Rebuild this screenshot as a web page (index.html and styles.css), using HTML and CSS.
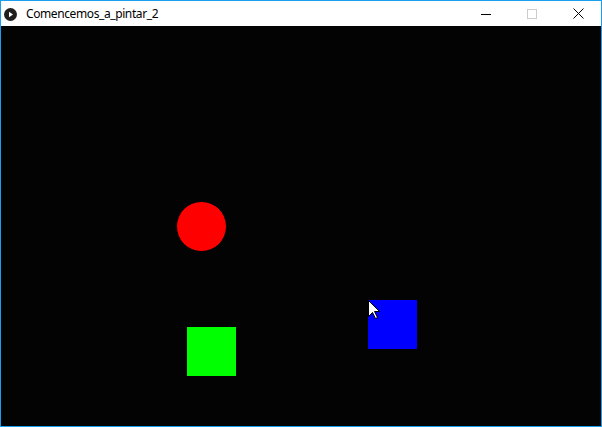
FILE: index.html
```html
<!DOCTYPE html>
<html>
<head>
<meta charset="utf-8">
<title>Comencemos_a_pintar_2</title>
<link rel="stylesheet" href="styles.css">
</head>
<body>
<div class="window">
  <div class="titlebar">
    <span class="app-icon">
      <svg width="13" height="13" viewBox="0 0 13 13"><circle cx="6.5" cy="6.5" r="6.5" fill="#1e1e1e"/><path d="M5 3.8 L9 6.5 L5 9.2 Z" fill="#fff"/></svg>
    </span>
    <span class="title">Comencemos_a_pintar_2</span>
    <div class="controls">
      <span class="btn"><svg width="10" height="10" viewBox="0 0 10 10"><path d="M0 5.5 H10" stroke="#000" stroke-width="1"/></svg></span>
      <span class="btn"><svg width="10" height="10" viewBox="0 0 10 10"><rect x="0.5" y="0.5" width="9" height="9" fill="none" stroke="#cccccc" stroke-width="1"/></svg></span>
      <span class="btn"><svg width="11" height="11" viewBox="0 0 11 11"><path d="M0.5 0.5 L10.5 10.5 M10.5 0.5 L0.5 10.5" stroke="#000" stroke-width="1"/></svg></span>
    </div>
  </div>
  <div class="canvas">
    <div class="shape circle"></div>
    <div class="shape square green"></div>
    <div class="shape square blue"></div>
    <svg class="cursor" width="13" height="20" viewBox="0 0 13 20"><path d="M0.5 0.5 V16.5 L4.5 12.5 L7.5 18.5 L9.5 17.5 L6.5 11.5 H11.5 Z" fill="#fff" stroke="#000" stroke-width="1" stroke-linejoin="miter"/></svg>
  </div>
</div>
</body>
</html>
```

FILE: styles.css
```css
html, body {
  margin: 0;
  padding: 0;
  background: #000;
}
.window {
  width: 600px;
  height: 425px;
  border: 1px solid #18a0ee;
  display: flex;
  flex-direction: column;
  background: #fff;
}
.titlebar {
  height: 25px;
  display: flex;
  align-items: center;
  background: #fff;
  font-family: "Noto Sans", "Open Sans", sans-serif;
  font-size: 12px;
  color: #000;
}
.app-icon {
  display: flex;
  margin-left: 3px;
  margin-top: 1px;
  width: 13px;
  height: 13px;
}
.title {
  margin-left: 9px;
  line-height: 25px;
  letter-spacing: -0.4px;
}
.controls {
  margin-left: auto;
  display: flex;
  height: 25px;
}
.btn {
  width: 46px;
  height: 25px;
  display: flex;
  align-items: center;
  justify-content: center;
}
.canvas {
  position: relative;
  width: 600px;
  height: 400px;
  background: #030303;
  overflow: hidden;
}
.shape {
  position: absolute;
  box-sizing: border-box;
}
.circle {
  left: 175px;
  top: 175px;
  width: 51px;
  height: 51px;
  border-radius: 50%;
  background: #ff0000;
  border: 1px solid #000;
}
.square {
  width: 49px;
  height: 49px;
}
.green {
  left: 186px;
  top: 301px;
  background: #00ff00;
}
.blue {
  left: 367px;
  top: 274px;
  background: #0000ff;
}
.cursor {
  position: absolute;
  left: 367px;
  top: 274px;
}
```
